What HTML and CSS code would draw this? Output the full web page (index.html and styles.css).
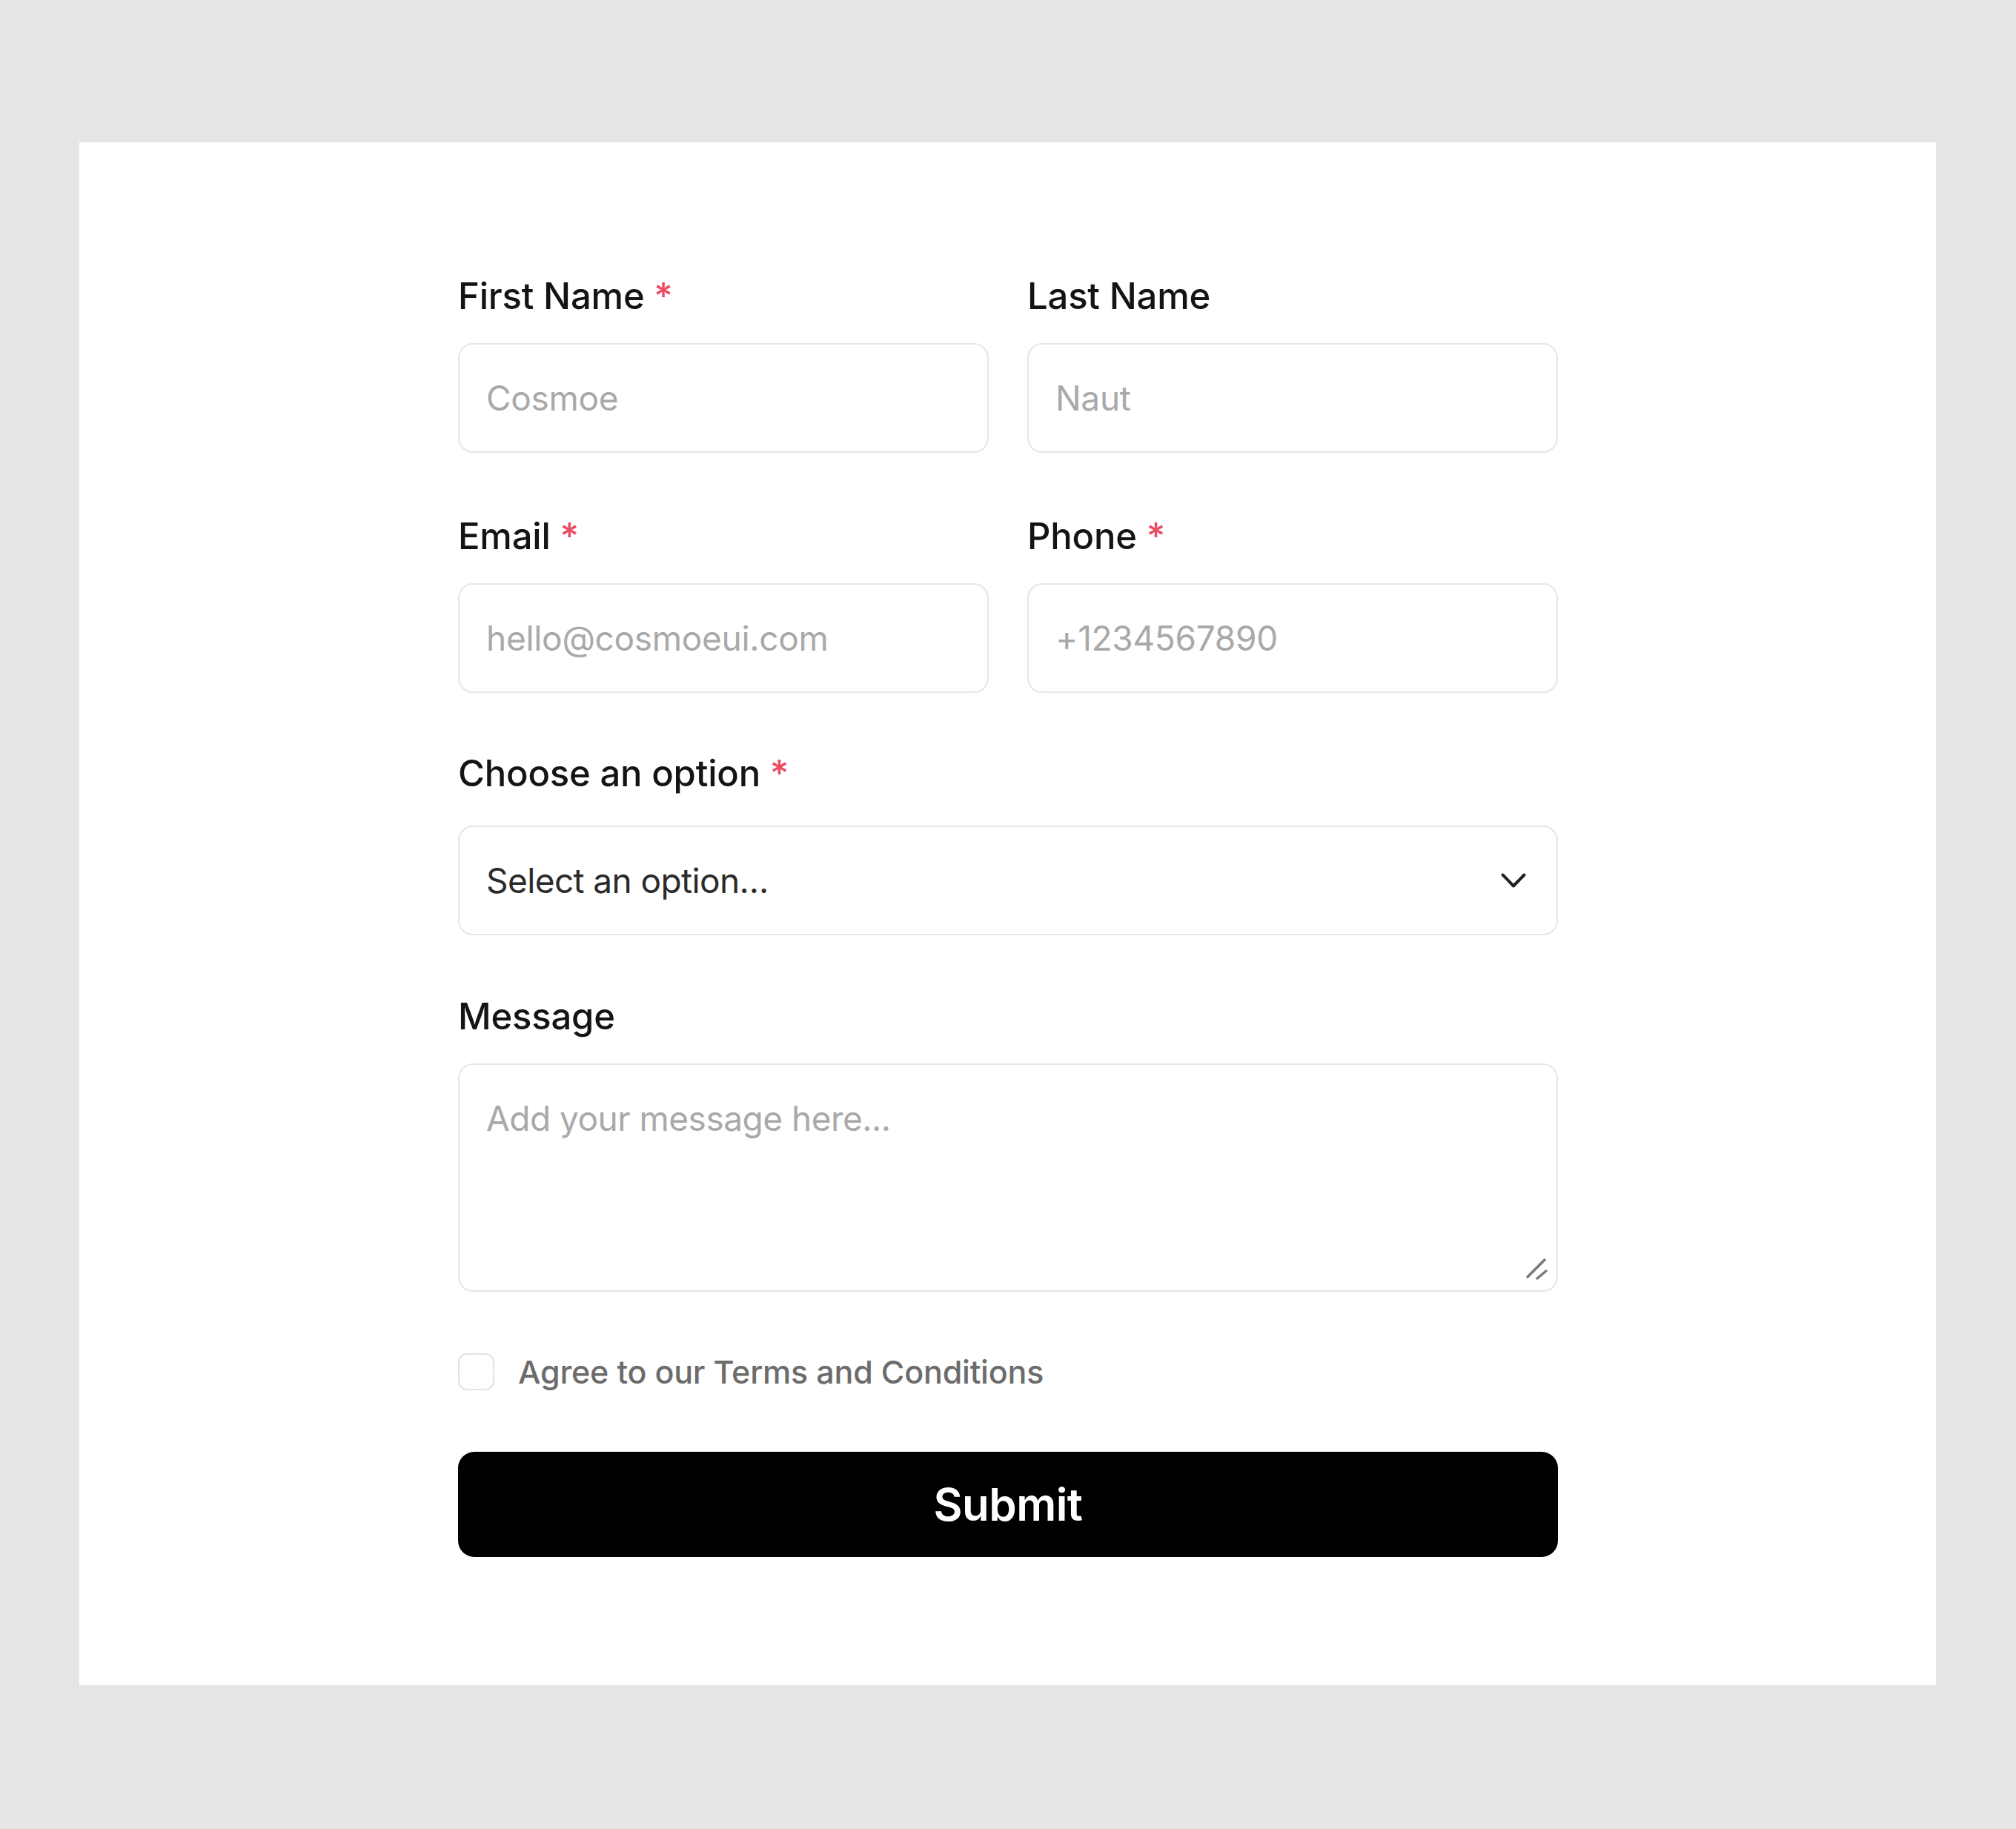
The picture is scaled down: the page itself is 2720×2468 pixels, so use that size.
FILE: index.html
```html
<!DOCTYPE html>
<html lang="en">
<head>
<meta charset="utf-8">
<title>Contact form</title>
<link rel="stylesheet" href="styles.css">
</head>
<body>
<div class="page">
  <div class="panel">
    <form class="form">
      <div class="row">
        <div class="field">
          <label class="label" for="fn">First Name <span class="req">*</span></label>
          <input class="control" id="fn" type="text" placeholder="Cosmoe">
        </div>
        <div class="field">
          <label class="label" for="ln">Last Name</label>
          <input class="control" id="ln" type="text" placeholder="Naut">
        </div>
      </div>
      <div class="row">
        <div class="field">
          <label class="label" for="em">Email <span class="req">*</span></label>
          <input class="control" id="em" type="email" placeholder="hello@cosmoeui.com">
        </div>
        <div class="field">
          <label class="label" for="ph">Phone <span class="req">*</span></label>
          <input class="control" id="ph" type="tel" placeholder="+1234567890">
        </div>
      </div>
      <div class="field field-select">
        <label class="label" for="opt">Choose an option <span class="req">*</span></label>
        <div class="select-wrap">
          <select class="control select" id="opt">
            <option>Select an option…</option>
          </select>
          <svg class="chevron" width="34" height="21" viewBox="0 0 34 21" aria-hidden="true">
            <polyline points="2.5,2.5 17,17.5 31.5,2.5" fill="none" stroke="#222" stroke-width="4" stroke-linecap="round" stroke-linejoin="round"/>
          </svg>
        </div>
      </div>
      <div class="field">
        <label class="label" for="msg">Message</label>
        <div class="textarea-wrap">
          <textarea class="control textarea" id="msg" placeholder="Add your message here..."></textarea>
          <svg class="grip" width="30" height="30" viewBox="0 0 30 30" aria-hidden="true">
            <line x1="3" y1="26" x2="26" y2="3" stroke="#7a7a7a" stroke-width="3.5" stroke-linecap="round"/>
            <line x1="16" y1="28" x2="28" y2="18" stroke="#7a7a7a" stroke-width="3.5" stroke-linecap="round"/>
          </svg>
        </div>
      </div>
      <label class="agree">
        <input class="check" type="checkbox">
        <span class="agree-text">Agree to our Terms and Conditions</span>
      </label>
      <button class="submit" type="button">Submit</button>
    </form>
  </div>
</div>
</body>
</html>
```
FILE: styles.css
```css
* {
  box-sizing: border-box;
}

html, body {
  margin: 0;
  padding: 0;
  background: #e5e5e5;
}

body {
  font-family: "Inter", "Liberation Sans", sans-serif;
  color: #161616;
}

.page {
  width: 2720px;
  height: 2468px;
  padding: 192px 0 0 107px;
}

.panel {
  width: 2505px;
  height: 2082px;
  background: #ffffff;
  padding: 178px 0 0 511px;
}

.form {
  width: 1484px;
  display: flex;
  flex-direction: column;
  gap: 83px;
}

.row {
  display: grid;
  grid-template-columns: 716px 716px;
  column-gap: 52px;
}

.field {
  display: flex;
  flex-direction: column;
  gap: 34px;
}

.field-select {
  margin: -4px 0 -3px;
  gap: 41px;
}

.label {
  font-size: 49px;
  line-height: 59px;
  font-weight: 500;
  color: #141414;
  letter-spacing: -0.2px;
}

.req {
  color: #ee4b63;
  font-weight: 500;
}

.control {
  display: block;
  width: 100%;
  height: 148px;
  border: 2px solid #e6e6e6;
  border-radius: 20px;
  background: #ffffff;
  padding: 0 36px;
  font-family: "Inter", "Liberation Sans", sans-serif;
  font-size: 46px;
  font-weight: 400;
  color: #2b2b2b;
  outline: none;
  letter-spacing: -0.3px;
}

.control::placeholder {
  color: #a9a9a9;
  opacity: 1;
}

.select-wrap,
.textarea-wrap {
  position: relative;
}

.select {
  appearance: none;
  -webkit-appearance: none;
  color: #2b2b2b;
  letter-spacing: -0.6px;
}

.chevron {
  position: absolute;
  right: 43px;
  top: 64px;
  pointer-events: none;
}

.textarea {
  height: 308px;
  padding: 45px 36px;
  line-height: 55px;
  resize: none;
  letter-spacing: -0.5px;
}

.grip {
  position: absolute;
  right: 14px;
  bottom: 16px;
  pointer-events: none;
}

.agree {
  display: flex;
  align-items: center;
  gap: 32px;
  height: 50px;
}

.check {
  appearance: none;
  -webkit-appearance: none;
  margin: 0;
  width: 49px;
  height: 50px;
  border: 2px solid #e3e3e3;
  border-radius: 12px;
  background: #ffffff;
}

.agree-text {
  font-size: 43px;
  font-weight: 500;
  color: #6c6c6c;
  letter-spacing: -0.2px;
}

.submit {
  display: block;
  width: 100%;
  height: 142px;
  border: none;
  border-radius: 22px;
  background: #000000;
  color: #ffffff;
  font-family: "Inter", "Liberation Sans", sans-serif;
  font-size: 60px;
  font-weight: 600;
  letter-spacing: -0.5px;
}
```
